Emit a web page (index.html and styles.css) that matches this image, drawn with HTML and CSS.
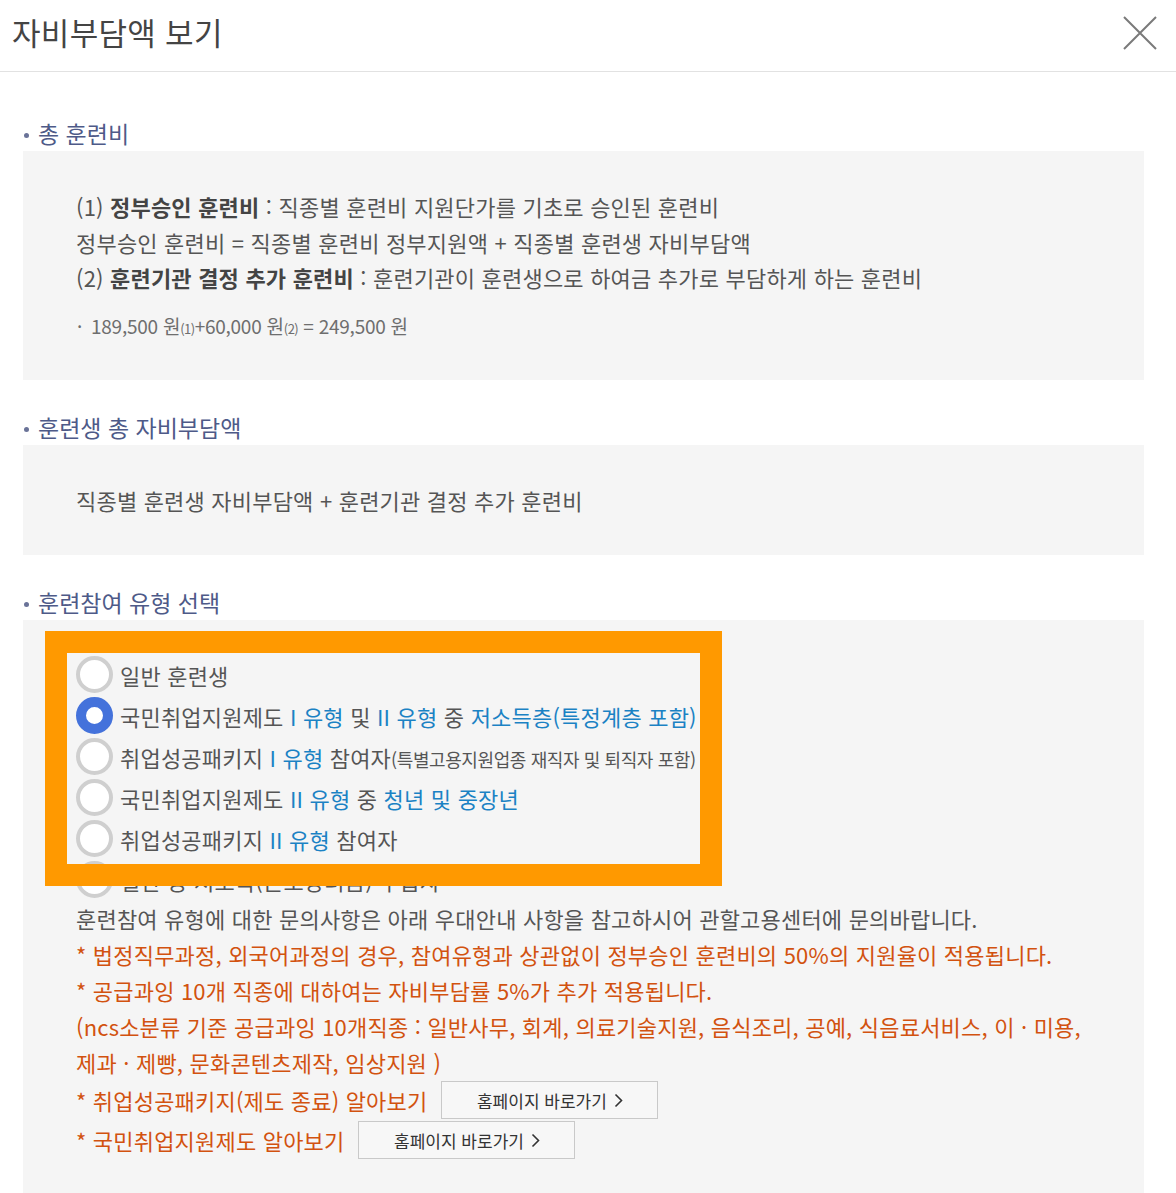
FILE: index.html
```html
<!DOCTYPE html>
<html lang="ko">
<head>
  <meta charset="UTF-8">
  <meta name="viewport" content="width=device-width, initial-scale=1">
  <title>자비부담액 보기</title>
  <link rel="stylesheet" href="styles.css">
</head>
<body>

<header class="modal-head">
  <h1 class="modal-title">자비부담액 보기</h1>
  <button class="modal-close" type="button" aria-label="닫기">
    <svg width="34" height="34" viewBox="0 0 34 34"><path d="M1 1L33 33M33 1L1 33" stroke="#7a7a7a" stroke-width="2" fill="none"/></svg>
  </button>
</header>

<div class="modal-body">
  <section class="sec">
    <h2 class="sec-title">총 훈련비</h2>
    <div class="sec-box">
      <p class="line">(1) <strong>정부승인 훈련비</strong> : 직종별 훈련비 지원단가를 기초로 승인된 훈련비</p>
      <p class="line">정부승인 훈련비 = 직종별 훈련비 정부지원액 + 직종별 훈련생 자비부담액</p>
      <p class="line">(2) <strong>훈련기관 결정 추가 훈련비</strong> : 훈련기관이 훈련생으로 하여금 추가로 부담하게 하는 훈련비</p>
      <p class="formula"><span class="dot">·</span>189,500 원<small>(1)</small>+60,000 원<small>(2)</small> = 249,500 원</p>
    </div>
  </section>

  <section class="sec">
    <h2 class="sec-title">훈련생 총 자비부담액</h2>
    <div class="sec-box">
      <p class="line">직종별 훈련생 자비부담액 + 훈련기관 결정 추가 훈련비</p>
    </div>
  </section>

  <section class="sec">
    <h2 class="sec-title">훈련참여 유형 선택</h2>
    <div class="sec-box type-box">
      <div class="type-list">
        <label class="radio"><input type="radio" name="type"><span class="mark"></span><span>일반 훈련생</span></label>
        <label class="radio"><input type="radio" name="type" checked><span class="mark"></span><span>국민취업지원제도 <em>I 유형</em> 및 <em>II 유형</em> 중 <em>저소득층(특정계층 포함)</em></span></label>
        <label class="radio"><input type="radio" name="type"><span class="mark"></span><span>취업성공패키지 <em>I 유형</em> 참여자<small>(특별고용지원업종 재직자 및 퇴직자 포함)</small></span></label>
        <label class="radio"><input type="radio" name="type"><span class="mark"></span><span>국민취업지원제도 <em>II 유형</em> 중 <em>청년 및 중장년</em></span></label>
        <label class="radio"><input type="radio" name="type"><span class="mark"></span><span>취업성공패키지 <em>II 유형</em> 참여자</span></label>
        <label class="radio"><input type="radio" name="type"><span class="mark"></span><span>일반 중 저소득(근로장려금) 수급자</span></label>
        <div class="highlight"></div>
      </div>

      <p class="line">훈련참여 유형에 대한 문의사항은 아래 우대안내 사항을 참고하시어 관할고용센터에 문의바랍니다.</p>
      <div class="notice">
        <p class="line">* 법정직무과정, 외국어과정의 경우, 참여유형과 상관없이 정부승인 훈련비의 50%의 지원율이 적용됩니다.</p>
        <p class="line">* 공급과잉 10개 직종에 대하여는 자비부담률 5%가 추가 적용됩니다.</p>
        <p class="line">(ncs소분류 기준 공급과잉 10개직종 : 일반사무, 회계, 의료기술지원, 음식조리, 공예, 식음료서비스, 이 · 미용,<br>제과 · 제빵, 문화콘텐츠제작, 임상지원 )</p>
        <div class="link-row">
          <span>* 취업성공패키지(제도 종료) 알아보기</span>
          <a class="link-btn" href="#">홈페이지 바로가기 <svg width="9" height="15" viewBox="0 0 9 15"><path d="M1.5 1.5L7.5 7.5L1.5 13.5" stroke="#333" stroke-width="1.6" fill="none"/></svg></a>
        </div>
        <div class="link-row">
          <span>* 국민취업지원제도 알아보기</span>
          <a class="link-btn" href="#">홈페이지 바로가기 <svg width="9" height="15" viewBox="0 0 9 15"><path d="M1.5 1.5L7.5 7.5L1.5 13.5" stroke="#333" stroke-width="1.6" fill="none"/></svg></a>
        </div>
      </div>
    </div>
  </section>
</div>

</body>
</html>
```

FILE: styles.css
```css
/* 기본 */
body {
  margin: 0;
  background: #fff;
  color: #555;
  font-family: "Noto Sans CJK KR", "Noto Sans", sans-serif;
}

p {
  margin: 0;
}

/* 헤더 */
.modal-head {
  display: flex;
  align-items: center;
  justify-content: space-between;
  height: 71px;
  padding: 0 19px 0 12px;
  border-bottom: 1px solid #e2e2e2;
}

.modal-title {
  margin: 0;
  font-size: 31px;
  font-weight: 400;
  color: #444;
  letter-spacing: 0.3px;
  position: relative;
  top: -4px;
}

.modal-close {
  padding: 0;
  border: 0;
  background: none;
  cursor: pointer;
  display: flex;
  position: relative;
  top: -3px;
}

/* 본문 */
.modal-body {
  padding: 45px 32px 0 23px;
}

.sec + .sec {
  margin-top: 31px;
}

.sec-title {
  position: relative;
  margin: 0;
  padding: 0 0 2px 15px;
  font-size: 23px;
  font-weight: 400;
  line-height: 32px;
  color: #4e5a88;
}

.sec-title::before {
  content: "";
  position: absolute;
  left: 1px;
  top: 16px;
  width: 5px;
  height: 5px;
  border-radius: 50%;
  background: #6a7398;
}

.sec-box {
  background: #f5f5f5;
  padding: 38px 53px 37px;
}

.line {
  font-size: 22px;
  line-height: 35.5px;
  letter-spacing: 0.2px;
  color: #555;
}

.line strong {
  font-weight: 700;
  color: #444;
}

.formula {
  margin: 15px 0 2px;
  font-size: 19px;
  line-height: 30px;
  color: #6e6e6e;
  letter-spacing: -0.25px;
}

.formula .dot {
  display: inline-block;
  width: 14px;
  margin-left: 1px;
}

.formula small {
  font-size: 13px;
  line-height: 1;
  letter-spacing: -0.5px;
}

/* 참여 유형 */
.type-box {
  padding-top: 34px;
  padding-bottom: 60px;
}

.type-box .line {
  line-height: 36px;
}

.type-list {
  position: relative;
}

.radio {
  display: flex;
  align-items: center;
  gap: 7px;
  height: 41px;
  font-size: 22px;
  letter-spacing: 0.2px;
  color: #555;
  white-space: nowrap;
  overflow: hidden;
}

.radio input {
  display: none;
}

.radio .mark {
  flex: none;
  box-sizing: border-box;
  width: 37px;
  height: 37px;
  border: 4px solid #cfcfcf;
  border-radius: 50%;
  background: #fff;
}

.radio input:checked + .mark {
  border: 10px solid #4472db;
}

.radio em {
  font-style: normal;
  color: #1b82c4;
}

.radio small {
  font-size: 18px;
  letter-spacing: -0.4px;
}

.highlight {
  position: absolute;
  left: -31px;
  top: -23px;
  width: 677px;
  height: 255px;
  box-sizing: border-box;
  border: 22px solid #ff9900;
  pointer-events: none;
}

.notice .line {
  color: #d2520f;
}

.link-row {
  display: flex;
  align-items: center;
  gap: 14px;
  height: 40px;
  font-size: 22px;
  letter-spacing: 0.2px;
  color: #d2520f;
}

.link-btn {
  display: flex;
  align-items: center;
  justify-content: center;
  gap: 7px;
  box-sizing: border-box;
  width: 217px;
  height: 38px;
  border: 1px solid #c9c9c9;
  background: #f7f7f7;
  color: #333;
  font-size: 17px;
  letter-spacing: 0;
  text-decoration: none;
}
```
